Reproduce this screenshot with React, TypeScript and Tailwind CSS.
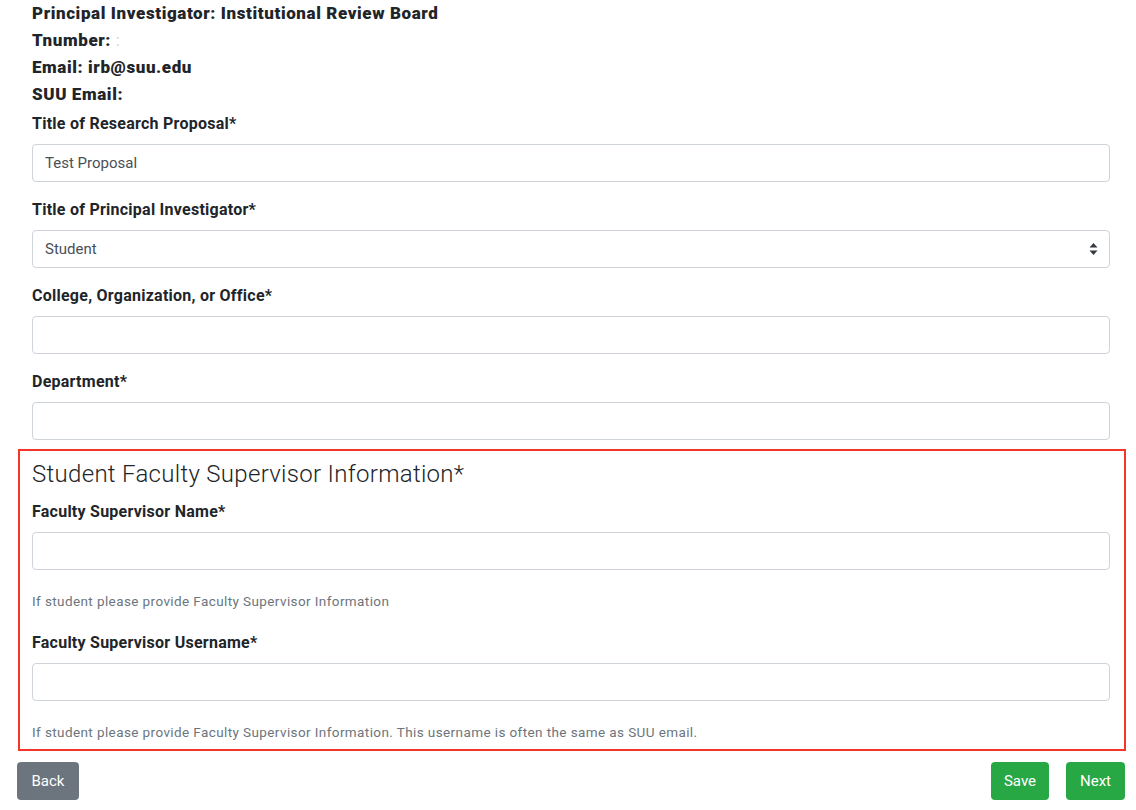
import React, { useState } from 'react';

function Field({ label, value = '', onChange }: { label: string; value?: string; onChange?: (v: string) => void }) {
  return (
    <div className="mb-[16px]">
      <label className="block text-[16px] leading-[24px] font-bold text-[#212529] mb-[8px] tracking-[0.25px]">{label}</label>
      <input
        value={value}
        onChange={(e) => onChange?.(e.target.value)}
        className="block w-full h-[38px] px-[12px] text-[15px] text-[#495057] bg-white border border-[#ced4da] rounded-[4px] outline-none"
      />
    </div>
  );
}

export default function App() {
  const [title, setTitle] = useState('Test Proposal');
  const [pi, setPi] = useState('Student');
  const [college, setCollege] = useState('');
  const [dept, setDept] = useState('');
  const [supName, setSupName] = useState('');
  const [supUser, setSupUser] = useState('');

  return (
    <div className="w-[1136px] h-[810px] bg-white overflow-hidden" style={{ fontFamily: 'Roboto, "Noto Sans", sans-serif' }}>
      <div className="pl-[32px] pr-[26px]">
        <div className="text-[17px] leading-[27px] font-black text-[#212529] tracking-[0.6px]">
          <div>Principal Investigator: Institutional Review Board</div>
          <div>Tnumber: <span className="text-[#d0d0d0] font-normal">:</span></div>
          <div>Email: irb@suu.edu</div>
          <div>SUU Email:</div>
        </div>

        <div className="mt-[4px]">
          <Field label="Title of Research Proposal*" value={title} onChange={setTitle} />

          <div className="mb-[16px]">
            <label className="block text-[16px] leading-[24px] font-bold text-[#212529] mb-[8px] tracking-[0.25px]">Title of Principal Investigator*</label>
            <div className="relative">
              <select
                value={pi}
                onChange={(e) => setPi(e.target.value)}
                className="block w-full h-[38px] pl-[12px] pr-[32px] text-[15px] text-[#495057] bg-white border border-[#ced4da] rounded-[4px] outline-none appearance-none"
              >
                <option>Student</option>
                <option>Faculty</option>
                <option>Staff</option>
              </select>
              <svg className="absolute right-[12px] top-[13px] pointer-events-none" width="9" height="12" viewBox="0 0 9 12">
                <path d="M4.5 0 L8.5 4.6 H0.5 Z" fill="#343a40" />
                <path d="M4.5 12 L8.5 7.4 H0.5 Z" fill="#343a40" />
              </svg>
            </div>
          </div>

          <Field label="College, Organization, or Office*" value={college} onChange={setCollege} />
          <div className="mb-[9px]">
            <label className="block text-[16px] leading-[24px] font-bold text-[#212529] mb-[8px] tracking-[0.25px]">Department*</label>
            <input
              value={dept}
              onChange={(e) => setDept(e.target.value)}
              className="block w-full h-[38px] px-[12px] text-[15px] text-[#495057] bg-white border border-[#ced4da] rounded-[4px] outline-none"
            />
          </div>
        </div>

        <div className="ml-[-14px] mr-[-16px] border-2 border-[#f4352a] pl-[12px] pr-[14px] pt-[9px] pb-[7px]">
          <h4 className="text-[24px] leading-[28px] font-light text-[#212529] mb-[12px] tracking-[0.3px]">Student Faculty Supervisor Information*</h4>

          <label className="block text-[16px] leading-[24px] font-bold text-[#212529] mb-[8px] tracking-[0.25px]">Faculty Supervisor Name*</label>
          <input
            value={supName}
            onChange={(e) => setSupName(e.target.value)}
            className="block w-full h-[38px] px-[12px] text-[15px] text-[#495057] bg-white border border-[#ced4da] rounded-[4px] outline-none"
          />
          <p className="mt-[21px] text-[13.5px] leading-[20px] text-[#6c757d] tracking-[0.4px]">If student please provide Faculty Supervisor Information</p>

          <label className="block mt-[20px] text-[16px] leading-[24px] font-bold text-[#212529] mb-[8px] tracking-[0.25px]">Faculty Supervisor Username*</label>
          <input
            value={supUser}
            onChange={(e) => setSupUser(e.target.value)}
            className="block w-full h-[38px] px-[12px] text-[15px] text-[#495057] bg-white border border-[#ced4da] rounded-[4px] outline-none"
          />
          <p className="mt-[21px] text-[13.5px] leading-[20px] text-[#6c757d] tracking-[0.4px]">If student please provide Faculty Supervisor Information. This username is often the same as SUU email.</p>
        </div>
      </div>

      <div className="flex items-center justify-between pl-[17px] pr-[11px] mt-[11px]">
        <button className="h-[38px] w-[62px] rounded-[4px] bg-[#6c757d] text-white text-[15px]">Back</button>
        <div className="flex gap-[17px]">
          <button className="h-[38px] w-[58px] rounded-[4px] bg-[#28a745] text-white text-[15px]">Save</button>
          <button className="h-[38px] w-[59px] rounded-[4px] bg-[#28a745] text-white text-[15px]">Next</button>
        </div>
      </div>
    </div>
  );
}
